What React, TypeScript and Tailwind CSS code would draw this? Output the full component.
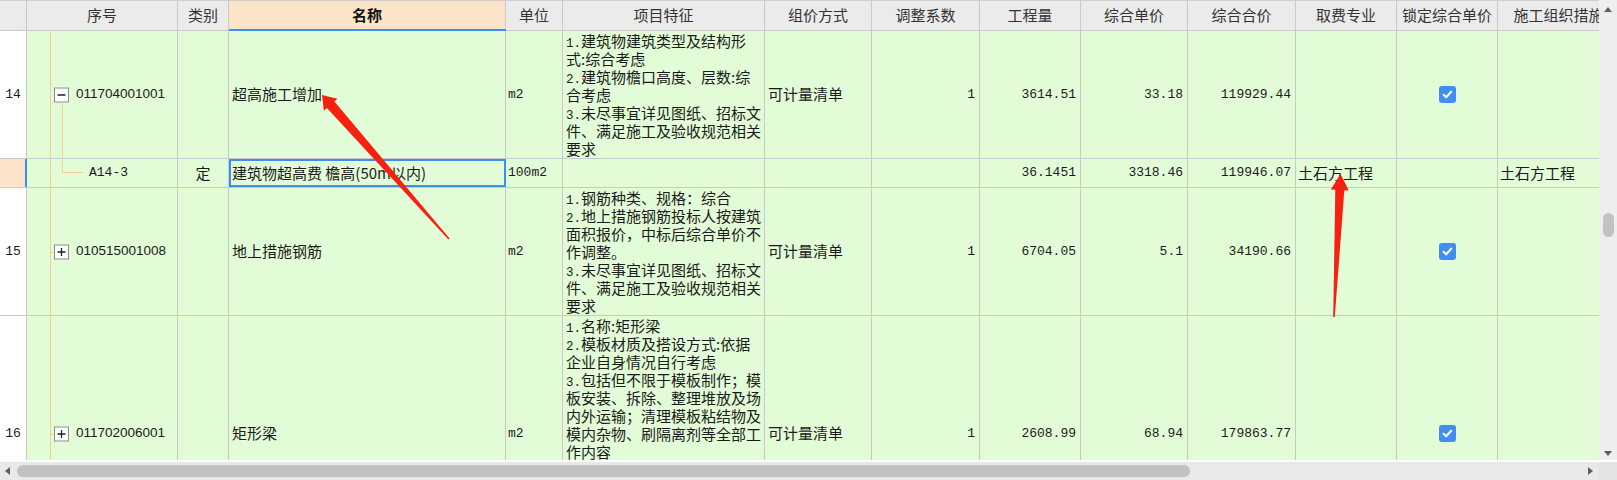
import React from 'react';

const CJK = "font-['Noto_Sans_CJK_SC','Noto_Sans',sans-serif]";
const MONO = "font-['Liberation_Mono','DejaVu_Sans_Mono',monospace]";
const SANS = "font-['Liberation_Sans',Arial,sans-serif]";

const LINE = 'border-[#c9c9c9]';
const ORANGE = 'bg-[#f6cf8e]';

// column widths, left to right (the last one runs under the scrollbar)
const W = {
  idx: 'w-[27px]',
  code: 'w-[151px]',
  cat: 'w-[51px]',
  name: 'w-[277px]',
  unit: 'w-[57px]',
  feat: 'w-[202px]',
  method: 'w-[107px]',
  coef: 'w-[108px]',
  qty: 'w-[101px]',
  price: 'w-[107px]',
  total: 'w-[108px]',
  fee: 'w-[101px]',
  lock: 'w-[101px]',
  org: 'w-[122px]',
};

const headers: { w: string; label: string; active?: boolean }[] = [
  { w: W.idx, label: '' },
  { w: W.code, label: '序号' },
  { w: W.cat, label: '类别' },
  { w: W.name, label: '名称', active: true },
  { w: W.unit, label: '单位' },
  { w: W.feat, label: '项目特征' },
  { w: W.method, label: '组价方式' },
  { w: W.coef, label: '调整系数' },
  { w: W.qty, label: '工程量' },
  { w: W.price, label: '综合单价' },
  { w: W.total, label: '综合合价' },
  { w: W.fee, label: '取费专业' },
  { w: W.lock, label: '锁定综合单价' },
  { w: W.org, label: '施工组织措施' },
];

type Row = {
  type: 'minus' | 'plus' | 'leaf';
  h: string;
  idx: string;
  code: string;
  cat: string;
  name: string;
  unit: string;
  feat: string[];
  method: string;
  coef: string;
  qty: string;
  price: string;
  total: string;
  fee: string;
  lock: boolean;
  org: string;
  selected?: boolean;
};

const rows: Row[] = [
  {
    type: 'minus',
    h: 'h-[128px]',
    idx: '14',
    code: '011704001001',
    cat: '',
    name: '超高施工增加',
    unit: 'm2',
    feat: [
      '1.建筑物建筑类型及结构形',
      '式:综合考虑',
      '2.建筑物檐口高度、层数:综',
      '合考虑',
      '3.未尽事宜详见图纸、招标文',
      '件、满足施工及验收规范相关',
      '要求',
    ],
    method: '可计量清单',
    coef: '1',
    qty: '3614.51',
    price: '33.18',
    total: '119929.44',
    fee: '',
    lock: true,
    org: '',
  },
  {
    type: 'leaf',
    h: 'h-[29px]',
    idx: '',
    code: 'A14-3',
    cat: '定',
    name: '建筑物超高费 檐高(50m以内)',
    unit: '100m2',
    feat: [],
    method: '',
    coef: '',
    qty: '36.1451',
    price: '3318.46',
    total: '119946.07',
    fee: '土石方工程',
    lock: false,
    org: '土石方工程',
    selected: true,
  },
  {
    type: 'plus',
    h: 'h-[128px]',
    idx: '15',
    code: '010515001008',
    cat: '',
    name: '地上措施钢筋',
    unit: 'm2',
    feat: [
      '1.钢筋种类、规格：综合',
      '2.地上措施钢筋投标人按建筑',
      '面积报价，中标后综合单价不',
      '作调整。',
      '3.未尽事宜详见图纸、招标文',
      '件、满足施工及验收规范相关',
      '要求',
    ],
    method: '可计量清单',
    coef: '1',
    qty: '6704.05',
    price: '5.1',
    total: '34190.66',
    fee: '',
    lock: true,
    org: '',
  },
  {
    type: 'plus',
    h: 'h-[236px]',
    idx: '16',
    code: '011702006001',
    cat: '',
    name: '矩形梁',
    unit: 'm2',
    feat: [
      '1.名称:矩形梁',
      '2.模板材质及搭设方式:依据',
      '企业自身情况自行考虑',
      '3.包括但不限于模板制作；模',
      '板安装、拆除、整理堆放及场',
      '内外运输；清理模板粘结物及',
      '模内杂物、刷隔离剂等全部工',
      '作内容',
      '4.对拉螺栓、止水螺杆等费用',
      '已包含在综合单价内',
      '5.未尽事宜详见图纸、招标文',
      '件、满足施工及验收规范相关',
      '要求',
    ],
    method: '可计量清单',
    coef: '1',
    qty: '2608.99',
    price: '68.94',
    total: '179863.77',
    fee: '',
    lock: true,
    org: '',
  },
];

function HeadCell({ w, label, active }: { w: string; label: string; active?: boolean }) {
  return (
    <div
      className={`${w} shrink-0 h-full relative flex items-center justify-center border-r ${LINE} ${
        active ? 'bg-[#fde4c8] font-bold text-[#111]' : ''
      }`}
    >
      <span className="whitespace-nowrap">{label}</span>
      {active && <span className="absolute left-0 right-[-1px] bottom-[-1px] h-[2px] bg-[#3d8ef0]" />}
    </div>
  );
}

function TreeBox({ plus }: { plus: boolean }) {
  return (
    <span className="absolute left-[27px] top-1/2 -translate-y-1/2 w-[15px] h-[15px] border border-[#8c8c8c] bg-white">
      <svg width="13" height="13" viewBox="0 0 13 13" className="block">
        <path d="M2.5 6.5h8" stroke="#222" strokeWidth="1.3" />
        {plus && <path d="M6.5 2.5v8" stroke="#222" strokeWidth="1.3" />}
      </svg>
    </span>
  );
}

function Check() {
  return (
    <span className="w-[17px] h-[17px] rounded-[3px] bg-[#3f8ff3] flex items-center justify-center">
      <svg width="11" height="11" viewBox="0 0 11 11">
        <path d="M1.6 5.8l2.6 2.5 5-5.6" fill="none" stroke="#fff" strokeWidth="2.1" strokeLinecap="round" strokeLinejoin="round" />
      </svg>
    </span>
  );
}

function CodeCell({ r }: { r: Row }) {
  const leaf = r.type === 'leaf';
  return (
    <div
      className={`${W.code} shrink-0 h-full relative flex items-center border-r ${LINE} ${
        leaf ? `pl-[62px] ${MONO} text-[13px]` : `pl-[49px] ${SANS} text-[13.5px]`
      }`}
    >
      <span className={`absolute left-[23px] top-0 bottom-[-1px] w-px ${ORANGE}`} />
      {r.type === 'minus' && (
        <>
          <TreeBox plus={false} />
          <span className={`absolute left-[35px] top-[72px] bottom-[-1px] w-px ${ORANGE}`} />
        </>
      )}
      {r.type === 'plus' && (
        <>
          <span className={`absolute left-[23px] top-1/2 w-[4px] h-px ${ORANGE}`} />
          <TreeBox plus />
        </>
      )}
      {leaf && (
        <>
          <span className={`absolute left-[35px] top-0 h-[14px] w-px ${ORANGE}`} />
          <span className={`absolute left-[35px] top-[13px] w-[21px] h-px ${ORANGE}`} />
        </>
      )}
      <span className="whitespace-nowrap">{r.code}</span>
    </div>
  );
}

function Num({ w, v }: { w: string; v: string }) {
  return (
    <div className={`${w} shrink-0 h-full flex items-center justify-end pr-[4px] border-r ${LINE} ${MONO} text-[13px]`}>
      <span className="whitespace-nowrap">{v}</span>
    </div>
  );
}

function Text({ w, v, pad = 'pl-[3px]' }: { w: string; v: string; pad?: string }) {
  return (
    <div className={`${w} shrink-0 h-full flex items-center ${pad} border-r ${LINE} overflow-hidden`}>
      <span className="whitespace-nowrap">{v}</span>
    </div>
  );
}

// "1.xxx" -> list number in the fixed-width face, like the original grid
function FeatLine({ text }: { text: string }) {
  const m = text.match(/^(\d\.)(.*)$/);
  return (
    <div className="whitespace-nowrap leading-[18px] h-[18px]">
      {m ? (
        <>
          <span className={`${MONO} text-[12.5px]`}>{m[1]}</span>
          {m[2]}
        </>
      ) : (
        text
      )}
    </div>
  );
}

function DataRow({ r }: { r: Row }) {
  return (
    <div className={`flex w-[1620px] ${r.h} border-b ${LINE} bg-[#e2fcd7]`}>
      <div
        className={`${W.idx} shrink-0 h-full flex items-center justify-center ${MONO} text-[13px] ${
          r.selected ? 'bg-[#fde4c8] border-r-2 border-[#3d8ef0]' : `bg-white border-r ${LINE}`
        }`}
      >
        {r.idx}
      </div>
      <CodeCell r={r} />
      <div className={`${W.cat} shrink-0 h-full flex items-center justify-center border-r ${LINE}`}>{r.cat}</div>
      <div className={`${W.name} shrink-0 h-full relative flex items-center pl-[3px] border-r ${LINE}`}>
        <span className="whitespace-nowrap">{r.name}</span>
        {r.selected && (
          <span className="absolute left-0 top-0 right-[-1px] bottom-0 border-2 border-[#3d8ef0]" />
        )}
      </div>
      <div className={`${W.unit} shrink-0 h-full flex items-center pl-[2px] border-r ${LINE} ${MONO} text-[13px]`}>
        {r.unit}
      </div>
      <div className={`${W.feat} shrink-0 h-full flex flex-col justify-center pl-[3px] border-r ${LINE} overflow-hidden`}>
        {r.feat.map((l, i) => (
          <FeatLine key={i} text={l} />
        ))}
      </div>
      <Text w={W.method} v={r.method} />
      <Num w={W.coef} v={r.coef} />
      <Num w={W.qty} v={r.qty} />
      <Num w={W.price} v={r.price} />
      <Num w={W.total} v={r.total} />
      <Text w={W.fee} v={r.fee} pad="pl-[2px]" />
      <div className={`${W.lock} shrink-0 h-full flex items-center justify-center border-r ${LINE}`}>
        {r.lock && <Check />}
      </div>
      <Text w={W.org} v={r.org} pad="pl-[2px]" />
    </div>
  );
}

function Tri({ dir }: { dir: 'up' | 'down' | 'left' | 'right' }) {
  const pts = {
    up: '0,5 4,0 8,5',
    down: '0,0 8,0 4,5',
    left: '5,0 5,8 0,4',
    right: '0,0 0,8 5,4',
  }[dir];
  const vertical = dir === 'up' || dir === 'down';
  return (
    <svg width={vertical ? 8 : 5} height={vertical ? 5 : 8} className="block shrink-0">
      <polygon points={pts} fill="#606060" />
    </svg>
  );
}

export default function App() {
  return (
    <div className={`relative w-[1617px] h-[480px] overflow-hidden bg-white text-[#1b1b1b] text-[15px] ${CJK}`}>
      <div className="flex h-[460px]">
        <div className="w-[1599px] h-full overflow-hidden flex flex-col">
          <div className={`flex w-[1620px] h-[31px] shrink-0 border-t border-t-[#cfcfcf] border-b ${LINE} bg-[#ebebeb] text-[#333]`}>
            {headers.map((h, i) => (
              <HeadCell key={i} {...h} />
            ))}
          </div>
          {rows.map((r, i) => (
            <div key={i} className="shrink-0">
              <DataRow r={r} />
            </div>
          ))}
        </div>
        <div className="w-[18px] h-full bg-[#eeeeee] flex flex-col items-center pt-[7px] pb-[4px]">
          <Tri dir="up" />
          <div className="mt-[201px] w-[11px] h-[24px] rounded-full bg-[#c2c2c2]" />
          <div className="flex-1" />
          <Tri dir="down" />
        </div>
      </div>
      <div className="flex h-[20px] border-t-2 border-white">
        <div className="w-[1599px] h-full bg-[#e9e9e9] flex items-center pl-[5px] pr-[6px]">
          <Tri dir="left" />
          <div className="ml-[7px] w-[1173px] h-[12px] rounded-full bg-[#c1c1c1]" />
          <div className="flex-1" />
          <Tri dir="right" />
        </div>
        <div className="w-[18px] h-full bg-[#e3e3e3]" />
      </div>

      {/* red annotation arrows */}
      <svg className="absolute left-0 top-0 pointer-events-none" width="1617" height="480">
        <polygon
          points="322,95 337.4,98.8 334.4,101.4 449.6,238.5 448.4,239.5 326.9,108.1 323.9,110.7"
          fill="#f8200f"
        />
        <polygon
          points="1340.5,174 1348.8,190.4 1344.3,190.2 1334.8,317 1333.2,317 1335.3,189.8 1330.8,189.6"
          fill="#f8200f"
        />
      </svg>
    </div>
  );
}
